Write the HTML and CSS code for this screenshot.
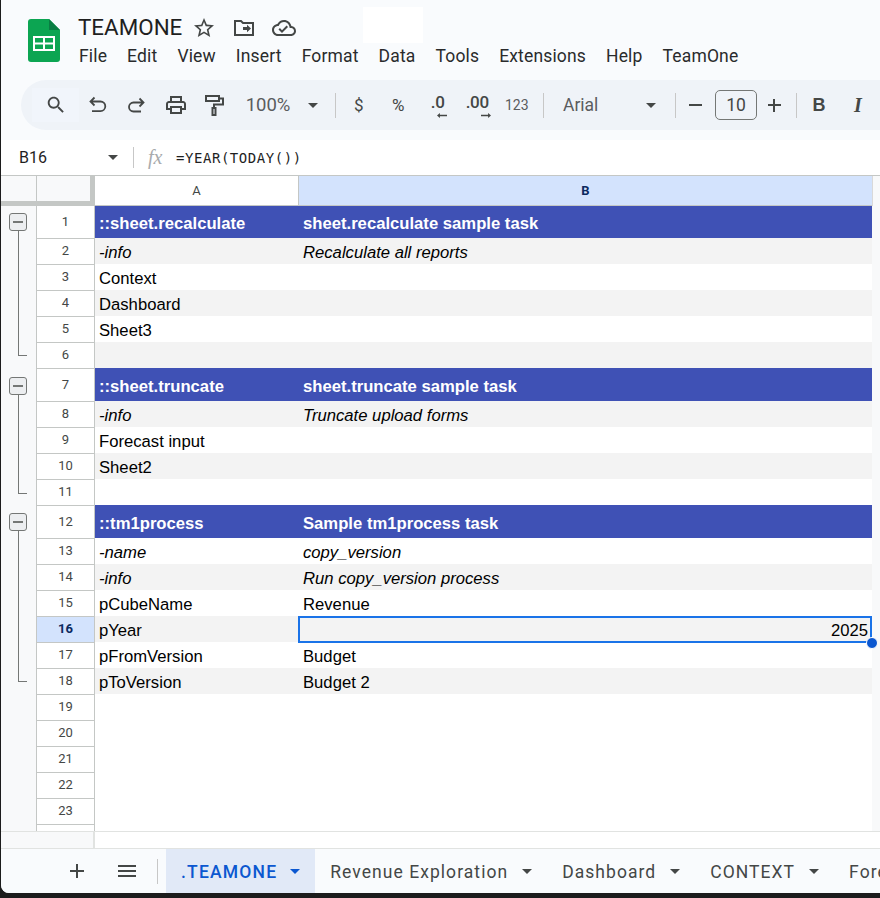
FILE: index.html
```html
<!DOCTYPE html>
<html lang="en">
<head>
<meta charset="utf-8">
<title>TEAMONE</title>
<link rel="stylesheet" href="styles.css">
</head>
<body>
<div class="window">
  <div class="mask"></div>
  <header class="titlebar">
    <svg class="logo" viewBox="0 0 32 43" width="32" height="43">
      <path fill="#0ca552" d="M3 0h18l11 11v29a3 3 0 0 1-3 3H3a3 3 0 0 1-3-3V3a3 3 0 0 1 3-3z"/>
      <path fill="#0a7d43" d="M21 0l11 11H21z"/>
      <path fill="none" stroke="#fff" stroke-width="2" d="M6 18h20v13H6zM6 24.500h20M16 18v13"/>
    </svg>
    <div class="titles">
      <div class="docline">
        <span class="docname">TEAMONE</span>
        <svg class="ic star" viewBox="0 0 24 24"><path d="M22 9.240l-7.190-.620L12 2 9.190 8.630 2 9.240l5.460 4.730L5.820 21 12 17.270 18.180 21l-1.630-7.030L22 9.240zM12 15.400l-3.760 2.270 1-4.280-3.320-2.880 4.380-.380L12 6.100l1.710 4.040 4.380.380-3.320 2.880 1 4.280L12 15.400z"/></svg>
        <svg class="ic folder" viewBox="0 0 24 24"><path fill="none" stroke="#444746" stroke-width="2" d="M3 5h6l2 2h10v12H3z"/><path d="M11 11h4V8.800l4 3.700-4 3.700V14h-4z"/></svg>
        <svg class="ic cloud" viewBox="0 0 24 24"><path d="M19.350 10.040C18.670 6.590 15.640 4 12 4 9.110 4 6.600 5.640 5.350 8.040 2.340 8.360 0 10.910 0 14c0 3.310 2.690 6 6 6h13c2.760 0 5-2.240 5-5 0-2.640-2.050-4.780-4.650-4.960zM19 18H6c-2.210 0-4-1.790-4-4 0-2.050 1.530-3.760 3.560-3.970l1.070-.110.500-.950C8.080 7.140 9.940 6 12 6c2.620 0 4.880 1.860 5.390 4.430l.300 1.500 1.530.110c1.560.100 2.780 1.410 2.780 2.960 0 1.650-1.350 3-3 3zm-9-3.820l-2.090-2.090L6.500 13.500 10 17l6.010-6.010-1.410-1.410z"/></svg>
      </div>
      <nav class="menu">
        <span>File</span><span>Edit</span><span>View</span><span>Insert</span><span>Format</span><span>Data</span><span>Tools</span><span>Extensions</span><span>Help</span><span>TeamOne</span>
      </nav>
    </div>
  </header>

  <div class="toolbar">
    <div class="tb search"><svg class="ic tbi" viewBox="0 0 24 24"><path d="M15.500 14h-.790l-.280-.270C15.410 12.590 16 11.110 16 9.500 16 5.910 13.090 3 9.500 3S3 5.910 3 9.500 5.910 16 9.500 16c1.610 0 3.090-.590 4.230-1.570l.270.280v.790l5 4.990L20.490 19l-4.990-5zm-6 0C7.010 14 5 11.990 5 9.500S7.010 5 9.500 5 14 7.010 14 9.500 11.990 14 9.500 14z"/></svg></div>
    <div class="tb w37"><svg class="ic tbl" viewBox="0 0 24 24"><path fill="none" stroke="#444746" stroke-width="1.800" d="M8.500 4.500L4.500 8.500l4 4M4.500 8.500H14.500a4.800 4.800 0 0 1 0 9.600H6"/></svg></div>
    <div class="tb w40"><svg class="ic tbl" viewBox="0 0 24 24"><path fill="none" stroke="#444746" stroke-width="1.800" d="M15.500 5.500l4 4-4 4M19.500 9.500H9.500a4.500 4.500 0 0 0 0 9h7.500"/></svg></div>
    <div class="tb w39"><svg class="ic tbl" viewBox="0 0 24 24"><path d="M19 8h-1V3H6v5H5c-1.660 0-3 1.340-3 3v6h4v4h12v-4h4v-6c0-1.660-1.340-3-3-3zM8 5h8v3H8V5zm8 12v2H8v-4h8v2zm2-2v-2H6v2H4v-4c0-.550.450-1 1-1h14c.550 0 1 .450 1 1v4h-2z"/></svg></div>
    <div class="tb w38"><svg class="ic tbl" viewBox="0 0 24 24"><path fill="none" stroke="#444746" stroke-width="2" d="M4 3h13v5H4zM17 5.500h4v6h-9V15M10.500 15h3v7h-3z"/></svg></div>
    <div class="tb zoom">100%</div>
    <div class="tb w24"><span class="caret"></span></div>
    <span class="sep sep-a"></span>
    <div class="tb w39h glyph">$</div>
    <div class="tb w39h glyph">%</div>
    <div class="tb w39h"><span class="dec">.0<svg class="arrow" viewBox="0 0 12 6"><path d="M0 3l3.500-3v2H12v2H3.500v2z"/></svg></span></div>
    <div class="tb w39h"><span class="dec">.00<svg class="arrow" viewBox="0 0 12 6"><path d="M12 3L8.500 0v2H0v2h8.500v2z"/></svg></span></div>
    <div class="tb w39h num">123</div>
    <span class="sep sep-b"></span>
    <div class="tb font">Arial</div>
    <div class="tb w24"><span class="caret"></span></div>
    <span class="sep sep-c"></span>
    <div class="tb w39"><span class="minus"></span></div>
    <div class="sizebox">10</div>
    <div class="tb w34"><span class="plus"></span></div>
    <span class="sep sep-d"></span>
    <div class="tb w44 bold">B</div>
    <div class="tb w34 ital">I</div>
  </div>

  <div class="formula">
    <span class="namebox">B16</span>
    <span class="caret caret-name"></span>
    <span class="sep sep-f"></span>
    <span class="fx">fx</span>
    <span class="ftext">=YEAR(TODAY())</span>
  </div>

  <div class="colhead">
    <div class="corner-g"></div>
    <div class="corner-r"></div>
    <div class="ch ch-a">A</div>
    <div class="ch ch-b">B</div>
    <div class="ch-end"></div>
  </div>

  <div class="sheet">
    <aside class="gutter">
      <div class="group g1"><span class="toggle"></span><span class="bracket"></span></div>
      <div class="group g2"><span class="toggle"></span><span class="bracket"></span></div>
      <div class="group g3"><span class="toggle"></span><span class="bracket"></span></div>
    </aside>
    <div class="rows">
      <div class="row hd first"><div class="rh">1</div><div class="ca">::sheet.recalculate</div><div class="cb">sheet.recalculate sample task</div></div>
      <div class="row alt it"><div class="rh">2</div><div class="ca">-info</div><div class="cb">Recalculate all reports</div></div>
      <div class="row"><div class="rh">3</div><div class="ca">Context</div><div class="cb"></div></div>
      <div class="row alt"><div class="rh">4</div><div class="ca">Dashboard</div><div class="cb"></div></div>
      <div class="row"><div class="rh">5</div><div class="ca">Sheet3</div><div class="cb"></div></div>
      <div class="row alt"><div class="rh">6</div><div class="ca"></div><div class="cb"></div></div>
      <div class="row hd"><div class="rh">7</div><div class="ca">::sheet.truncate</div><div class="cb">sheet.truncate sample task</div></div>
      <div class="row alt it"><div class="rh">8</div><div class="ca">-info</div><div class="cb">Truncate upload forms</div></div>
      <div class="row"><div class="rh">9</div><div class="ca">Forecast input</div><div class="cb"></div></div>
      <div class="row alt"><div class="rh">10</div><div class="ca">Sheet2</div><div class="cb"></div></div>
      <div class="row"><div class="rh">11</div><div class="ca"></div><div class="cb"></div></div>
      <div class="row hd"><div class="rh">12</div><div class="ca">::tm1process</div><div class="cb">Sample tm1process task</div></div>
      <div class="row it"><div class="rh">13</div><div class="ca">-name</div><div class="cb">copy_version</div></div>
      <div class="row alt it"><div class="rh">14</div><div class="ca">-info</div><div class="cb">Run copy_version process</div></div>
      <div class="row"><div class="rh">15</div><div class="ca">pCubeName</div><div class="cb">Revenue</div></div>
      <div class="row alt"><div class="rh rh-sel">16</div><div class="ca">pYear</div><div class="cb sel">2025<span class="handle"></span></div></div>
      <div class="row"><div class="rh">17</div><div class="ca">pFromVersion</div><div class="cb">Budget</div></div>
      <div class="row alt"><div class="rh">18</div><div class="ca">pToVersion</div><div class="cb">Budget 2</div></div>
      <div class="row"><div class="rh">19</div><div class="ca"></div><div class="cb"></div></div>
      <div class="row"><div class="rh">20</div><div class="ca"></div><div class="cb"></div></div>
      <div class="row"><div class="rh">21</div><div class="ca"></div><div class="cb"></div></div>
      <div class="row"><div class="rh">22</div><div class="ca"></div><div class="cb"></div></div>
      <div class="row"><div class="rh">23</div><div class="ca"></div><div class="cb"></div></div>
      <div class="row"><div class="rh"></div><div class="ca"></div><div class="cb"></div></div>
    </div>
    <div class="vscroll"></div>
  </div>

  <div class="hscroll"><div class="hs-left"></div><div class="hs-track"></div></div>

  <footer class="tabs">
    <svg class="ic tab-add" viewBox="0 0 24 24"><path d="M19 13h-6v6h-2v-6H5v-2h6V5h2v6h6z"/></svg>
    <svg class="ic tab-all" viewBox="0 0 24 24"><path d="M3 18h18v-2H3zM3 13h18v-2H3zM3 6v2h18V6z"/></svg>
    <span class="sep sep-t"></span>
    <div class="tab active">.TEAMONE<span class="caret"></span></div>
    <div class="tab">Revenue Exploration<span class="caret"></span></div>
    <div class="tab">Dashboard<span class="caret"></span></div>
    <div class="tab">CONTEXT<span class="caret"></span></div>
    <div class="tab">Forecast input<span class="caret"></span></div>
  </footer>
</div>
</body>
</html>
```

FILE: styles.css
```css
* { box-sizing: border-box; }
html, body { margin: 0; padding: 0; }
body {
  width: 880px;
  height: 898px;
  overflow: hidden;
  background: #1c1c1c;
  font-family: Roboto, "Liberation Sans", sans-serif;
  color: #1f1f1f;
}
.window {
  position: relative;
  margin-left: 1px;
  width: 879px;
  height: 893px;
  background: #f9fbfd;
  overflow: hidden;
  border-bottom-left-radius: 8px;
}
.mask {
  position: absolute;
  left: 362px;
  top: 7px;
  width: 60px;
  height: 36px;
  background: #fff;
}
.ic { display: block; fill: #444746; flex: none; }

/* title */
.titlebar { height: 80px; display: flex; padding-left: 27px; }
.logo { margin-top: 19px; flex: none; }
.titles { margin-left: 18px; display: flex; flex-direction: column; }
.docline { height: 44px; padding-top: 11px; display: flex; align-items: center; }
.docname { font-size: 22.4px; line-height: 33px; color: #1f1f1f; width: 104px; white-space: nowrap; }
.star { width: 24px; height: 24px; margin-left: 10px; }
.folder { width: 24px; height: 24px; margin-left: 16px; }
.cloud { width: 24px; height: 24px; margin-left: 16px; }
.menu { display: flex; gap: 20px; margin-left: 1px; font-size: 17.5px; letter-spacing: .16px; line-height: 24px; color: #2a2b2c; }

/* toolbar */
.toolbar {
  margin-left: 20px;
  width: 900px;
  height: 50px;
  background: #eff3f8;
  border-radius: 25px 0 0 25px;
  padding-left: 11px;
  display: flex;
  align-items: center;
  color: #444746;
}
.tb { height: 34px; display: flex; align-items: center; justify-content: center; flex: none; }
.search { width: 47px; background: #f1f5fb; }
.tbi { width: 22px; height: 22px; }
.tbl { width: 24px; height: 24px; }
.w24 { width: 24px; }
.w34 { width: 34px; }
.w37 { width: 37px; }
.w38 { width: 38px; }
.w39 { width: 39px; }
.w39h { width: 39.500px; }
.w44 { width: 44px; }
.w40 { width: 40px; }
.zoom { width: 68px; font-size: 18.500px; padding-left: 2px; color: #5a5c5e; }
.glyph { font-size: 17px; }
.num { font-size: 14px; color: #5a5c5e; }
.dec { position: relative; font-size: 17px; font-weight: 500; letter-spacing: -.3px; line-height: 17px; top: -3px; }
.arrow { position: absolute; right: -2px; bottom: -7px; width: 10px; height: 5px; fill: #444746; }
.font { width: 76px; justify-content: flex-start; font-size: 17.500px; color: #5a5c5e; }
.caret { display: inline-block; width: 0; height: 0; border-left: 5px solid transparent; border-right: 5px solid transparent; border-top: 5px solid #444746; }
.sep { display: block; width: 1px; background: #c7c7c7; flex: none; }
.sep-a { height: 25px; margin: 0 3px 0 10px; }
.sep-b { height: 25px; margin: 0 19px 0 6.500px; }
.sep-c { height: 25px; margin-left: 12px; }
.sep-d { height: 25px; margin-left: 5px; }
.minus { display: block; width: 13px; height: 2px; background: #444746; }
.plus { display: block; width: 13px; height: 13px; background:
  linear-gradient(#444746, #444746) center / 13px 2px no-repeat,
  linear-gradient(#444746, #444746) center / 2px 13px no-repeat; }
.sizebox { width: 42px; height: 30px; border: 1px solid #747775; border-radius: 5px; display: flex; align-items: center; justify-content: center; font-size: 17.500px; color: #444746; flex: none; }
.bold { font-family: "Liberation Sans", sans-serif; font-weight: 700; font-size: 18px; }
.ital { font-family: "Liberation Serif", serif; font-style: italic; font-weight: 700; font-size: 20px; }

/* formula */
.formula {
  margin-top: 10px;
  height: 36px;
  background: #fff;
  border-bottom: 1px solid #c4c7c5;
  display: flex;
  align-items: center;
  padding-left: 18px;
}
.namebox { width: 89px; font-size: 16px; color: #1f1f1f; }
.caret-name { margin-right: 15px; }
.sep-f { height: 21px; }
.fx { font-family: "Liberation Serif", serif; font-style: italic; font-size: 20px; color: #a8abad; margin-left: 14px; width: 28px; }
.ftext { font-family: "DejaVu Sans Mono", monospace; font-size: 14px; letter-spacing: .55px; color: #1f1f1f; }

/* column headers */
.colhead { height: 30px; display: flex; background: #fff; font-size: 13px; color: #444746; }
.corner-g { width: 36px; background: #f8f9fa; border-right: 1px solid #c4c7c5; border-bottom: 5px solid #c4c7c5; }
.corner-r { width: 58px; background: #f8f9fa; border-right: 5px solid #c4c7c5; border-bottom: 5px solid #c4c7c5; }
.ch { display: flex; align-items: center; justify-content: center; border-bottom: 1px solid #c4c7c5; }
.ch-a { width: 204px; border-right: 1px solid #c4c7c5; }
.ch-b { width: 573px; background: #d3e3fd; font-weight: 700; color: #0b2a5f; }
.ch-end { flex: 1; background: #f8f9fa; border-left: 1px solid #d9d9d9; }

/* sheet */
.sheet { height: 625px; display: flex; background: #fff; overflow: hidden; }
.gutter { width: 36px; flex: none; background: #f8f9fa; border-right: 1px solid #c4c7c5; }
.group { display: block; }
.toggle { display: block; position: relative; width: 18px; height: 18px; margin-left: 8px; border: 1px solid #747775; border-radius: 3px; background: #eceef0; }
.toggle::after { content: ""; position: absolute; left: 3px; right: 3px; top: 7px; height: 2px; background: #747775; }
.bracket { display: block; margin-left: 17px; width: 9px; border-left: 1px solid #747775; border-bottom: 1px solid #747775; }
.g1 { height: 162px; padding-top: 7px; }
.g1 .bracket { height: 125px; }
.g2 { height: 137px; padding-top: 9px; }
.g2 .bracket { height: 99px; }
.g3 { padding-top: 8px; }
.g3 .bracket { height: 151px; }
.rows { width: 835px; flex: none; }
.row { height: 26px; display: flex; font-family: "Liberation Sans", Arial, sans-serif; font-size: 16.670px; color: #000; }
.row.hd { height: 33px; }
.row.first { height: 32px; }
.rh { width: 58px; flex: none; display: flex; align-items: center; justify-content: center; padding-bottom: 2px; font-family: Roboto, sans-serif; font-size: 13px; color: #444746; background: #fff; border-top: 1px solid #c4c7c5; border-right: 1px solid #c4c7c5; }
.row.first .rh { border-top: 0; }
.rh-sel { background: #d3e3fd; font-weight: 700; color: #0b2a5f; }
.ca, .cb { display: flex; align-items: center; padding: 4px 4px 0; white-space: nowrap; overflow: hidden; }
.first .ca, .first .cb { padding-top: 3px; }
.ca { width: 204px; }
.cb { width: 573px; }
.alt .ca, .alt .cb { background: #f3f3f3; }
.it .ca, .it .cb { font-style: italic; }
.hd .ca, .hd .cb { background: #3f51b5; color: #fff; font-weight: 700; }
.sel { position: relative; overflow: visible; justify-content: flex-end; padding-right: 4px; }
.sel::before { content: ""; position: absolute; left: -1px; top: 0; right: 0; bottom: -1px; border: 2px solid #1a73e8; }
.handle { position: absolute; right: -6px; bottom: -7px; width: 12px; height: 12px; border-radius: 50%; background: #0b57d0; border: 1px solid #fff; }
.vscroll { flex: 1; background: #f8f9fa; }

/* bottom */
.hscroll { height: 17px; display: flex; background: #fff; border-top: 1px solid #e1e3e1; }
.hs-left { width: 94px; background: #f8f9fa; border-right: 2px solid #e1e3e1; }
.hs-track { flex: 1; }
.tabs { height: 45px; display: flex; align-items: center; background: #f9fbfd; border-top: 1px solid #e1e3e1; color: #444746; }
.tab-add { width: 24px; height: 24px; margin-left: 64px; }
.tab-all { width: 24px; height: 24px; margin-left: 26px; }
.sep-t { height: 25px; margin-left: 18px; margin-right: 8px; }
.tab { height: 100%; display: flex; align-items: center; padding: 1px 15px 0; font-size: 17.500px; letter-spacing: 1.050px; white-space: nowrap; flex: none; }
.tab .caret { margin-left: 14px; }
.tab.active { background: #e1e9f7; color: #0b57d0; font-weight: 500; letter-spacing: 1.200px; }
.tab.active .caret { margin-left: 13px; border-top-color: #0b57d0; }
```
